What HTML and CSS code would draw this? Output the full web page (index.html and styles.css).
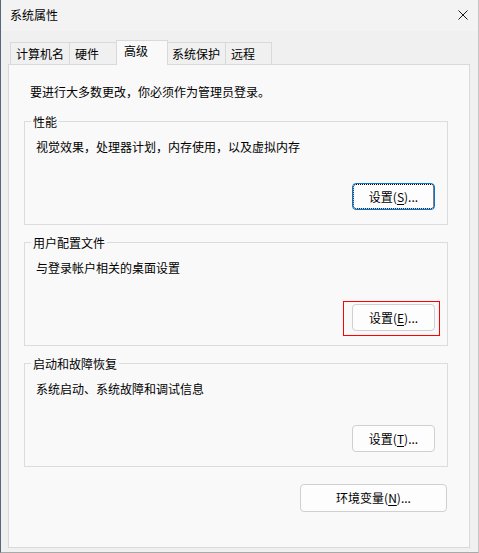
FILE: index.html
```html
<!DOCTYPE html>
<html lang="zh-CN">
<head>
<meta charset="utf-8">
<title>系统属性</title>
<link rel="stylesheet" href="styles.css">
</head>
<body>
<div class="window">
  <div class="titlebar">
    <span class="title">系统属性</span>
    <svg class="close" width="10" height="10" viewBox="0 0 10 10" aria-label="关闭"><path d="M0.5 0.5L9.5 9.5M9.5 0.5L0.5 9.5" stroke="#1a1a1a" stroke-width="1" fill="none"/></svg>
  </div>
  <div class="tabs">
    <div class="tab t1">计算机名</div>
    <div class="tab t2">硬件</div>
    <div class="tab t3 active">高级</div>
    <div class="tab t4">系统保护</div>
    <div class="tab t5">远程</div>
  </div>
  <div class="panel">
    <p class="intro">要进行大多数更改，你必须作为管理员登录。</p>
    <fieldset class="group">
      <legend>性能</legend>
      <p class="desc">视觉效果，处理器计划，内存使用，以及虚拟内存</p>
      <div class="actions"><button class="btn focused">设置(<u>S</u>)...</button></div>
    </fieldset>
    <fieldset class="group">
      <legend>用户配置文件</legend>
      <p class="desc">与登录帐户相关的桌面设置</p>
      <div class="actions"><span class="mark"><button class="btn">设置(<u>E</u>)...</button><svg class="highlight" width="97" height="35" viewBox="0 0 97 35"><rect x="0.5" y="0.5" width="96" height="34" fill="none" stroke="#ff0000" stroke-width="1"/></svg></span></div>
    </fieldset>
    <fieldset class="group last">
      <legend>启动和故障恢复</legend>
      <p class="desc">系统启动、系统故障和调试信息</p>
      <div class="actions"><button class="btn">设置(<u>T</u>)...</button></div>
    </fieldset>
    <div class="footer"><button class="btn wide">环境变量(<u>N</u>)...</button></div>
  </div>
</div>
</body>
</html>
```
FILE: styles.css
```css
* { box-sizing: border-box; }
html, body { margin: 0; padding: 0; }
body {
  font-family: "Noto Sans CJK SC", "Microsoft YaHei", sans-serif;
  font-size: 12px;
  color: #000;
  background: #5a6878;
}
.window {
  width: 479px;
  height: 553px;
  background: #f0f0f0;
  border-left: 1px solid #56687a;
  border-right: 1px solid #c4c4c4;
  border-bottom: 1px solid #a9a9a9;
  padding-bottom: 4px;
  display: flex;
  flex-direction: column;
}
.titlebar {
  height: 31px;
  flex: none;
  background: #f3f3f3;
  display: flex;
  align-items: center;
  justify-content: space-between;
  padding: 0 10px 1px 9px;
  line-height: 16px;
}
.close { display: block; }
.tabs {
  display: flex;
  align-items: flex-end;
  height: 24px;
  flex: none;
  margin: 9px 0 0 9px;
}
.tab {
  height: 22px;
  border: 1px solid #d9d9d9;
  border-bottom: none;
  background: #f0f0f0;
  line-height: 21px;
  padding-left: 5px;
  margin-left: -1px;
  white-space: nowrap;
}
.tab:first-child { margin-left: 0; }
.t1 { width: 60px; }
.t2 { width: 48px; }
.t3 { width: 52px; }
.t4 { width: 59px; padding-left: 4px; }
.t5 { width: 47px; }
.tab.active {
  height: 25px;
  background: #f9f9f9;
  line-height: 20px;
  padding-left: 7px;
  margin-bottom: -1px;
  position: relative;
  z-index: 1;
}
.panel {
  flex: 1;
  margin: 0 8px 0 7px;
  background: #f9f9f9;
  border: 1px solid #d9d9d9;
  padding: 19px 21px 0 15px;
}
.intro {
  margin: 0 0 14px 6px;
  line-height: 16px;
}
.group {
  margin: 0 0 10px;
  padding: 10px 12px 14px 6px;
  border: 1px solid #dcdcdc;
  min-width: 0;
}
.group.last { margin-bottom: 0; }
.group legend {
  padding: 0 2px;
  margin: 0;
  line-height: 15px;
}
.desc {
  margin: 0 0 0 5px;
  line-height: 16px;
}
.actions {
  display: flex;
  justify-content: flex-end;
  margin-top: 28px;
}
.btn {
  width: 83px;
  height: 27px;
  border: 1px solid #d0d0d0;
  border-radius: 4px;
  background: #fdfdfd;
  font-family: inherit;
  font-size: 12px;
  line-height: 16px;
  color: #000;
  padding: 0;
  display: block;
}
.btn u { text-decoration: underline; text-underline-offset: 2px; }
.btn.focused {
  border-color: #0078d4;
  outline: 1px dotted #000;
  outline-offset: -2px;
}
.mark {
  position: relative;
  display: inline-flex;
}
.highlight {
  position: absolute;
  left: -9px;
  top: -3px;
  display: block;
  pointer-events: none;
}
.footer {
  display: flex;
  justify-content: flex-end;
  margin-top: 17px;
  padding-right: 1px;
}
.btn.wide {
  width: 147px;
  height: 28px;
}
```
